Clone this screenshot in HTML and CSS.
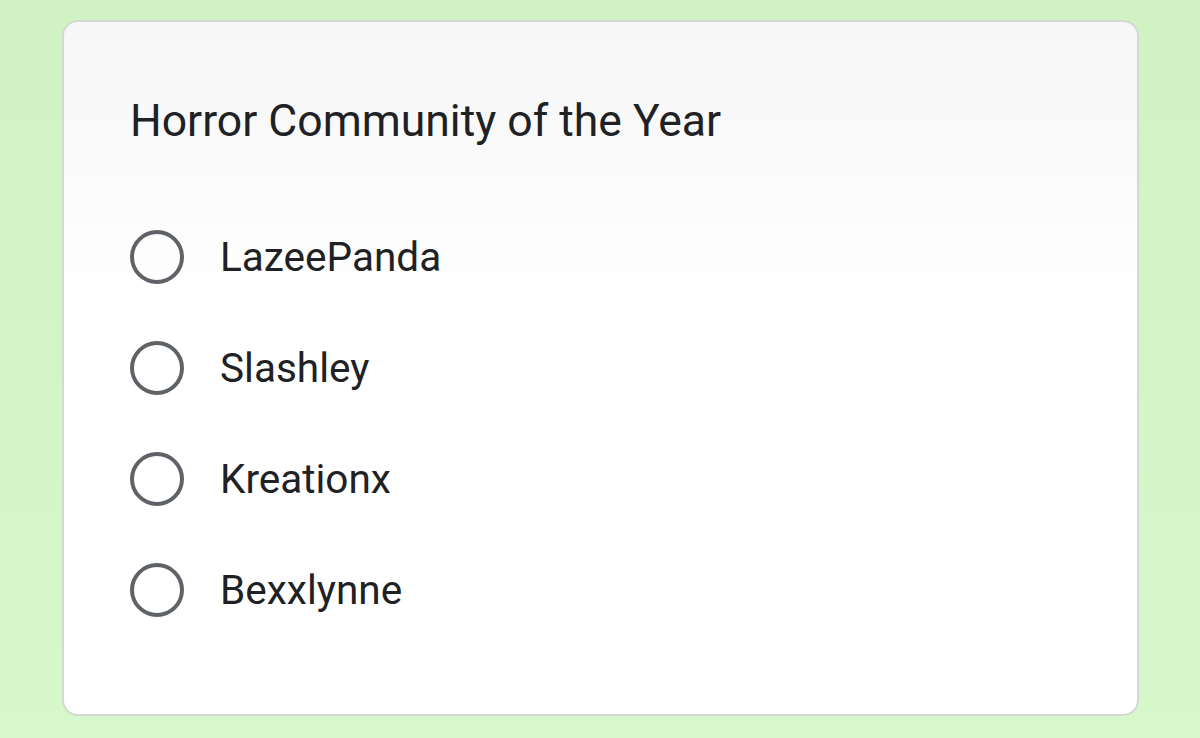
FILE: index.html
```html
<!DOCTYPE html>
<html>
<head>
<meta charset="utf-8">
<link rel="stylesheet" href="styles.css">
</head>
<body>
<div class="page">
  <div class="card">
    <h1 class="title">Horror Community of the Year</h1>
    <ul class="options">
      <li class="option"><span class="radio"></span><span class="label">LazeePanda</span></li>
      <li class="option"><span class="radio"></span><span class="label">Slashley</span></li>
      <li class="option"><span class="radio"></span><span class="label">Kreationx</span></li>
      <li class="option"><span class="radio"></span><span class="label">Bexxlynne</span></li>
    </ul>
  </div>
</div>
</body>
</html>
```

FILE: styles.css
```css
html, body {
  margin: 0;
  padding: 0;
}
body {
  width: 1200px;
  height: 738px;
  overflow: hidden;
  background: linear-gradient(180deg, #d1f2c2 0%, #d7f8cb 100%);
  font-family: Roboto, "Noto Sans", sans-serif;
}
.page {
  padding: 20px 61px 0 62px;
}
.card {
  box-sizing: border-box;
  height: 696px;
  border: 2px solid #d5d9d3;
  border-radius: 16px;
  background: linear-gradient(180deg, #f7f7f7 0%, #fafafa 20%, #ffffff 40%);
  padding: 70px 0 0 66px;
}
.title {
  margin: 0;
  font-weight: 400;
  font-size: 44.5px;
  line-height: 58px;
  color: #202124;
}
.options {
  list-style: none;
  margin: 0;
  padding: 0;
  margin-top: 51px;
}
.option {
  display: flex;
  align-items: center;
  height: 111px;
}
.radio {
  box-sizing: border-box;
  width: 54px;
  height: 54px;
  border: 4.5px solid #5f6368;
  border-radius: 50%;
  flex: none;
  margin-right: 36px;
}
.label {
  font-size: 40.5px;
  color: #202124;
}
```
